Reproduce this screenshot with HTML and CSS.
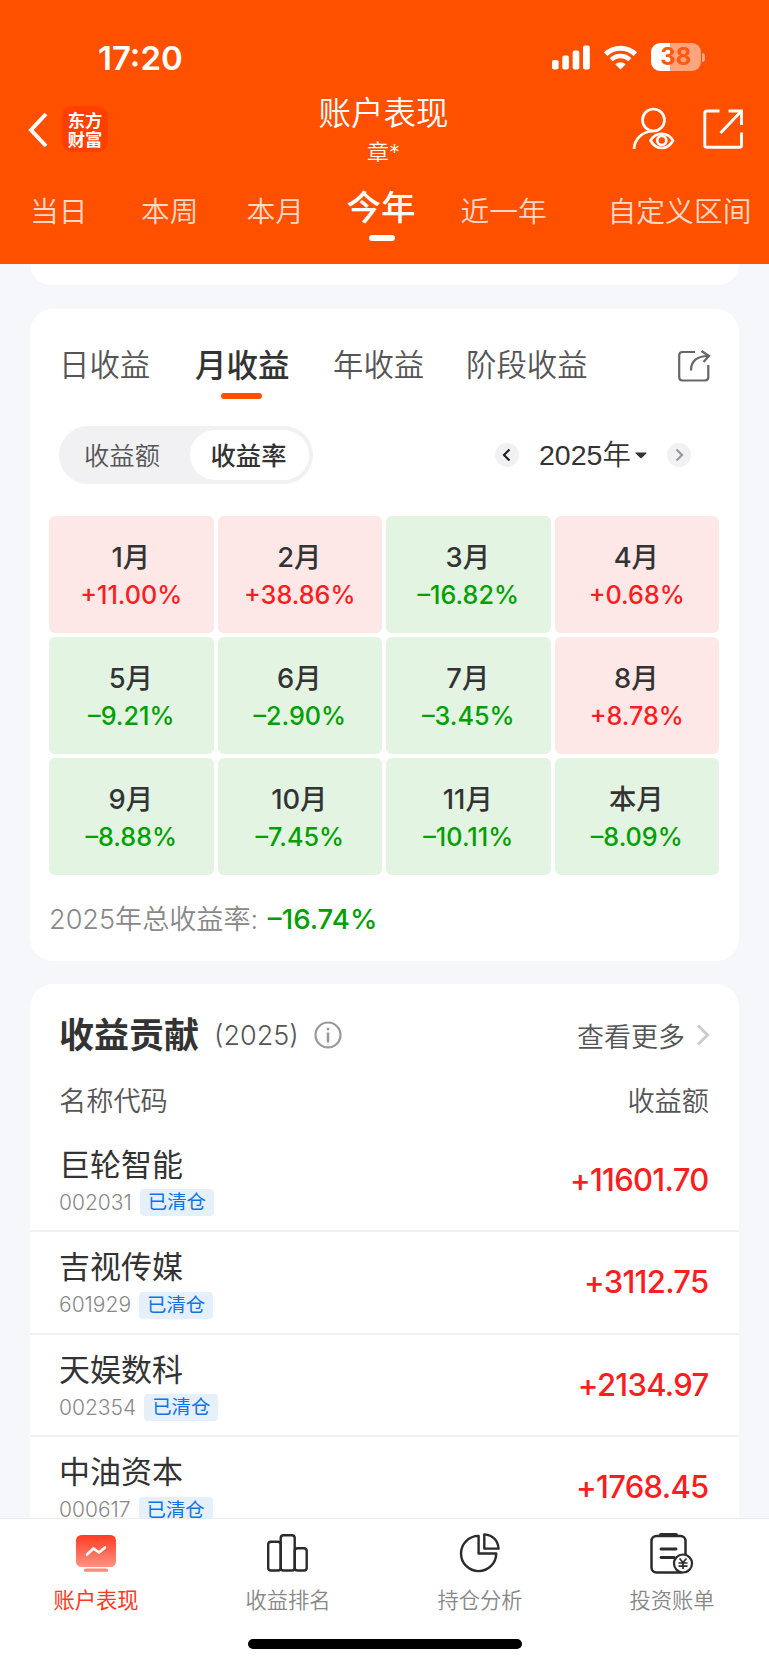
FILE: index.html
```html
<!DOCTYPE html>
<html lang="zh-CN">
<head>
<meta charset="utf-8">
<title>账户表现</title>
<link rel="stylesheet" href="styles.css">
</head>
<body>
<div class="app">
  <header class="header">
    <div class="status">
      <span class="time">17:20</span>
      <div class="status-icons">
        <svg width="38" height="25" viewBox="0 0 38 25" fill="#fff"><rect x="0" y="15" width="6.6" height="9.5" rx="2"/><rect x="10.3" y="10.500" width="6.600" height="14" rx="2"/><rect x="20.700" y="5.500" width="6.600" height="19" rx="2"/><rect x="31" y="0.500" width="6.800" height="24" rx="2"/></svg>
        <svg class="wifi" width="33" height="25" viewBox="0 0 33 25"><g fill="none" stroke="#fff" stroke-width="5"><path d="M1.700 9.200 A21.200 21.200 0 0 1 31.300 9.200"/><path d="M7.200 14.800 A13.300 13.300 0 0 1 25.800 14.800" stroke-width="4.400"/></g><path d="M16.500 24.500 L11.300 19.300 A7.400 7.400 0 0 1 21.700 19.300Z" fill="#fff"/></svg>
        <div class="battery"><span class="battery-body">38</span><span class="battery-cap"></span></div>
      </div>
    </div>
    <div class="navbar">
      <div class="nav-left">
        <svg width="20" height="36" viewBox="0 0 20 36" fill="none" stroke="#fff" stroke-width="4"><path d="M18 2 L3 18 L18 34"/></svg>
        <div class="logo"><span>东方</span><span>财富</span></div>
      </div>
      <div class="nav-title"><h1>账户表现</h1><p>章*</p></div>
      <div class="nav-right">
        <svg width="44" height="44" viewBox="0 0 44 44" fill="none" stroke="#fff" stroke-width="2.700"><circle cx="22.500" cy="13" r="11"/><path d="M3 42 C3.500 32 11 24.500 22 24"/><path d="M19.500 33.500 C25 24.500 36.500 24.500 42 33.500 C36.500 43.500 25 43.500 19.500 33.500Z" stroke-linejoin="round"/><circle cx="30.800" cy="33.500" r="4.500"/></svg>
        <svg width="40" height="40" viewBox="0 0 40 40" fill="none" stroke="#fff" stroke-width="2.900"><path d="M16.500 2 H4 Q1.800 2 1.800 4 V36.500 Q1.800 38.300 4 38.300 H36.500 Q38.500 38.300 38.500 36.500 V23.500"/><path d="M25.500 2 H38.500 V16 M38 2.500 L17.500 24"/></svg>
      </div>
    </div>
    <nav class="periods">
      <span>当日</span><span>本周</span><span>本月</span><span class="active">今年</span><span>近一年</span><span>自定义区间</span>
    </nav>
  </header>

  <main class="content">
    <div class="card card-tail"></div>

    <section class="card returns">
      <div class="tabs">
        <span>日收益</span><span class="active">月收益</span><span>年收益</span><span>阶段收益</span>
        <svg width="34" height="34" viewBox="0 0 34 34" fill="none" stroke="#666" stroke-width="2.200"><path d="M18 3 H5.500 Q2.200 3 2.200 6.300 V28 Q2.200 31.500 5.500 31.500 H28 Q31.300 31.500 31.300 28 V16"/><path d="M14 21.500 C14 12 20 7 31.500 7 M24.500 2 L32 7 L26.500 13"/></svg>
      </div>
      <div class="controls">
        <div class="toggle"><span>收益额</span><span class="on">收益率</span></div>
        <div class="year">
          <span class="circle"><svg width="24" height="24" viewBox="0 0 24 24" fill="none" stroke="#222" stroke-width="2.200"><path d="M14.500 6.500 L9 12 L14.500 17.500"/></svg></span>
          <span class="year-text">2025年</span>
          <svg class="caret" width="12" height="7" viewBox="0 0 12 7"><path d="M1 .5 H11 Q12.200 .5 11.300 1.500 L7.200 5.600 Q6 6.800 4.800 5.600 L.7 1.500 Q-.2 .5 1 .5Z" fill="#333"/></svg>
          <span class="circle"><svg width="24" height="24" viewBox="0 0 24 24" fill="none" stroke="#999" stroke-width="2.200"><path d="M9.500 6.500 L15 12 L9.500 17.500"/></svg></span>
        </div>
      </div>
      <div class="months">
        <div class="month up"><b>1月</b><span>+11.00%</span></div>
        <div class="month up"><b>2月</b><span>+38.86%</span></div>
        <div class="month down"><b>3月</b><span>–16.82%</span></div>
        <div class="month up"><b>4月</b><span>+0.68%</span></div>
        <div class="month down"><b>5月</b><span>–9.21%</span></div>
        <div class="month down"><b>6月</b><span>–2.90%</span></div>
        <div class="month down"><b>7月</b><span>–3.45%</span></div>
        <div class="month up"><b>8月</b><span>+8.78%</span></div>
        <div class="month down"><b>9月</b><span>–8.88%</span></div>
        <div class="month down"><b>10月</b><span>–7.45%</span></div>
        <div class="month down"><b>11月</b><span>–10.11%</span></div>
        <div class="month down"><b>本月</b><span>–8.09%</span></div>
      </div>
      <p class="total">2025年总收益率: <b>–16.74%</b></p>
    </section>

    <section class="card contrib">
      <div class="contrib-head">
        <h2>收益贡献</h2><span class="contrib-year">(2025)</span>
        <svg width="28" height="28" viewBox="0 0 28 28" fill="none" stroke="#999" stroke-width="2.200"><circle cx="14" cy="14" r="12.500"/><path d="M14 11.500 V21.500 M14 6.700 V9.200" stroke-width="2.500"/></svg>
        <span class="more">查看更多</span>
        <svg class="more-arrow" width="14" height="22" viewBox="0 0 14 22" fill="none" stroke="#ccc" stroke-width="3"><path d="M2 1.500 L11.500 11 L2 20.500"/></svg>
      </div>
      <div class="columns"><span>名称代码</span><span>收益额</span></div>
      <div class="stock"><div><div class="name">巨轮智能</div><div class="meta"><span class="code">002031</span><span class="tag">已清仓</span></div></div><b>+11601.70</b></div>
      <div class="stock"><div><div class="name">吉视传媒</div><div class="meta"><span class="code">601929</span><span class="tag">已清仓</span></div></div><b>+3112.75</b></div>
      <div class="stock"><div><div class="name">天娱数科</div><div class="meta"><span class="code">002354</span><span class="tag">已清仓</span></div></div><b>+2134.97</b></div>
      <div class="stock"><div><div class="name">中油资本</div><div class="meta"><span class="code">000617</span><span class="tag">已清仓</span></div></div><b>+1768.45</b></div>
    </section>
  </main>

  <footer class="footer">
    <nav class="tabbar">
      <div class="tab current">
        <svg width="46" height="46" viewBox="0 0 46 46"><defs><linearGradient id="screen" x1="0" y1="0" x2="0" y2="1"><stop offset="0" stop-color="#ff3b22"/><stop offset="1" stop-color="#ff9384"/></linearGradient></defs><rect x="3" y="5" width="40" height="32" rx="5.500" fill="url(#screen)"/><rect x="11" y="38.500" width="24" height="3.200" rx="1.500" fill="#ff8b7c"/><path d="M14 24.500 L20.500 18.500 L26 22.500 L32 17.500" fill="none" stroke="#fff" stroke-width="2.700" stroke-linecap="round" stroke-linejoin="round"/></svg>
        <span>账户表现</span>
      </div>
      <div class="tab">
        <svg width="46" height="46" viewBox="0 0 46 46" fill="none" stroke="#2b2b2b" stroke-width="2.400"><rect x="3.200" y="11.700" width="12.500" height="28.800" rx="2.800"/><rect x="15.700" y="5.300" width="14" height="35.200" rx="2.800"/><rect x="29.700" y="18.200" width="12" height="22.300" rx="2.800"/></svg>
        <span>收益排名</span>
      </div>
      <div class="tab">
        <svg width="46" height="46" viewBox="0 0 46 46" fill="none" stroke="#2b2b2b" stroke-width="2.400" stroke-linejoin="round"><path d="M21.600 5.900 A17.600 17.600 0 1 0 39.200 23.500 H21.600Z"/><path d="M27.300 4.400 Q40.500 6 41.600 18.600 H27.300Z"/></svg>
        <span>持仓分析</span>
      </div>
      <div class="tab">
        <svg width="46" height="46" viewBox="0 0 46 46" fill="none" stroke="#2b2b2b" stroke-width="2.500"><rect x="2.500" y="6" width="34" height="36.500" rx="5"/><path d="M12 5 H27" stroke-width="4" stroke-linecap="round"/><path d="M12 19 H27 M12 27.500 H25" stroke-width="2.800" stroke-linecap="round"/><circle cx="34" cy="33.500" r="9" fill="#fff" stroke-width="2.200"/><path d="M30.500 28.500 L34 32.500 L37.500 28.500 M29.500 33 H38.500 M29.500 36.200 H38.500 M34 32.500 V39" stroke-width="1.700"/></svg>
        <span>投资账单</span>
      </div>
    </nav>
    <div class="home"></div>
  </footer>
</div>
</body>
</html>
```

FILE: styles.css
```css
* { box-sizing: border-box; }
body {
  margin: 0;
  font-family: Inter, "Noto Sans CJK SC", sans-serif;
  color: #333;
  background: #f6f7fa;
}
h1, h2, p { margin: 0; font-weight: inherit; }
svg { display: block; flex: none; }
.app { width: 769px; height: 1665px; display: flex; flex-direction: column; overflow: hidden; white-space: nowrap; }

/* header */
.header { height: 264px; flex: none; background: #ff5000; color: #fff; }
.status { height: 93px; padding: 21px 64px 0 98px; display: flex; justify-content: space-between; align-items: center; }
.time { font-size: 33px; font-weight: 600; line-height: 40px; padding-top: 2px; }
.status-icons { display: flex; align-items: center; }
.wifi { margin: 0 14px 0 14.500px; }
.battery { display: flex; align-items: center; gap: 1px; }
.battery-body {
  width: 49.500px; height: 28px; border-radius: 9px;
  background: linear-gradient(90deg, #fff 39%, #ffa57d 39%);
  color: #ff5a10; font-size: 24px; font-weight: 700; line-height: 28px; text-align: center;
}
.battery-cap { width: 3.500px; height: 9px; border-radius: 0 4px 4px 0; background: #ffa57d; }

.navbar { height: 76px; padding: 0 26px 0 28px; display: grid; grid-template-columns: 200px 1fr 200px; }
.nav-left { display: flex; align-items: center; gap: 14px; padding-bottom: 4px; }
.nav-left svg { margin-top: 1px; }
.logo { width: 46px; height: 46px; border-radius: 10px; background: #ff4000; display: flex; flex-direction: column; align-items: center; justify-content: center; }
.logo span { font-family: "Noto Sans CJK SC", sans-serif; font-size: 17.300px; line-height: 19.500px; font-weight: 700; }
.nav-title { text-align: center; padding-top: 1px; margin-left: -4px; }
.nav-title h1 { font-size: 32.500px; line-height: 40px; font-weight: 350; }
.nav-title p { font-size: 22px; line-height: 28px; margin-top: 4px; font-weight: 350; }
.nav-right { display: flex; align-items: center; justify-content: flex-end; gap: 28px; padding-bottom: 5px; }

.periods { height: 95px; padding-left: 30px; display: grid; grid-template-columns: 111px 105.500px 100px 114px 147px 1fr; font-size: 28.800px; font-weight: 350; line-height: 86px; color: rgba(255,255,255,.78); }
.periods .active { position: relative; font-size: 34.500px; font-weight: 500; line-height: 77px; color: #fff; }
.periods .active::after { content: ""; position: absolute; left: 22px; top: 66px; width: 26px; height: 6px; border-radius: 3px; background: #fff; }

/* scroll area */
.content { flex: 1; min-height: 0; overflow: hidden; padding: 0 30.500px 0 29.500px; }
.card { background: #fff; border-radius: 23px; }
.card-tail { height: 21px; border-radius: 0 0 23px 23px; margin-bottom: 24px; }
.returns { height: 652px; margin-bottom: 23px; padding: 0 19.500px; }

.tabs { height: 117px; padding-left: 10px; display: grid; grid-template-columns: 136px 138px 133px 211px 34px; font-size: 30.400px; font-weight: 350; line-height: 113px; color: #555; }
.tabs svg { margin-top: 40px; }
.tabs .active { position: relative; font-size: 31.500px; font-weight: 500; color: #333; line-height: 114px; }
.tabs .active::after { content: ""; position: absolute; left: 26px; top: 84px; width: 41px; height: 6px; border-radius: 3px; background: #ff5000; }

.controls { display: flex; justify-content: space-between; align-items: center; padding: 0 28.500px 0 10px; }
.toggle { width: 254px; height: 58px; border-radius: 29px; background: #f1f1f4; padding: 4px; display: flex; font-size: 25.300px; font-weight: 350; line-height: 51px; color: #555; }
.toggle span { width: 127px; text-align: center; padding-right: 9px; }
.toggle .on { width: 119px; padding-right: 2px; border-radius: 25px; background: #fff; font-weight: 500; color: #333; }
.year { display: flex; align-items: center; }
.circle { width: 24px; height: 24px; border-radius: 50%; background: #f1f1f4; }
.year-text { margin-left: 20px; font-family: "Liberation Sans", "Noto Sans CJK SC", sans-serif; font-size: 28.500px; line-height: 42px; width: 96px; font-weight: 350; }
.caret { margin-right: 19.500px; }

.months { margin-top: 32px; display: grid; grid-template-columns: repeat(4, 1fr); grid-auto-rows: 117px; gap: 4px; }
.month { border-radius: 6px; display: flex; flex-direction: column; align-items: center; padding-top: 24px; }
.month b { font-size: 27.300px; font-weight: 500; line-height: 36px; padding-right: 1px; }
.month span { font-size: 25.200px; font-weight: 500; line-height: 36px; margin-top: 1px; }
.up { background: #fde7e7; }
.up span { color: #fa1e1e; }
.down { background: #e3f4e3; }
.down span { color: #00a000; }
.total { margin-top: 25px; font-size: 27.100px; line-height: 38px; font-weight: 350; color: #888; }
.total b { margin-left: 2px; font-size: 27.700px; font-weight: 500; color: #00a000; }

/* contribution */
.contrib-head { height: 97px; padding: 5px 28.500px 0 29.500px; display: flex; align-items: center; }
.contrib h2 { font-size: 35px; line-height: 50px; font-weight: 700; }
.contrib-year { margin: 0 15px 0 15px; font-size: 27px; font-weight: 350; color: #555; }
.more { margin-left: auto; margin-right: 11px; font-size: 27px; font-weight: 350; color: #555; }
.columns { height: 48.500px; padding: 0 29.500px 0 29.500px; display: flex; justify-content: space-between; font-size: 27.200px; line-height: 42px; font-weight: 350; color: #555; }
.stock { height: 102.600px; padding: 15px 30px 0 29.500px; display: flex; justify-content: space-between; border-bottom: 2px solid #f0f1f2; }
.name { font-size: 31px; line-height: 40px; font-weight: 400; color: #333; }
.meta { margin-top: 4px; display: flex; align-items: center; gap: 8px; }
.code { font-size: 21px; line-height: 28px; font-weight: 350; color: #888; }
.tag { height: 27px; padding: 0 8px; border-radius: 4px; background: #e6f0fb; color: #0f73e6; font-size: 19.400px; line-height: 27px; font-weight: 400; }
.stock b { font-size: 31px; line-height: 70px; font-weight: 550; letter-spacing: -0.7px; color: #fa1e1e; }

/* bottom bar */
.footer { height: 147px; flex: none; border-top: 1px solid #e9eaec; background: #fff; }
.tabbar { height: 120px; padding-top: 11px; margin-right: 1px; display: grid; grid-template-columns: repeat(4, 1fr); }
.tab { display: flex; flex-direction: column; align-items: center; font-size: 21.300px; line-height: 30px; font-weight: 350; color: #888; }
.tab span { margin-top: 9px; }
.current { color: #ff3820; font-weight: 400; }
.home { width: 274px; height: 10px; border-radius: 5px; background: #000; margin: 0 auto; }
```
